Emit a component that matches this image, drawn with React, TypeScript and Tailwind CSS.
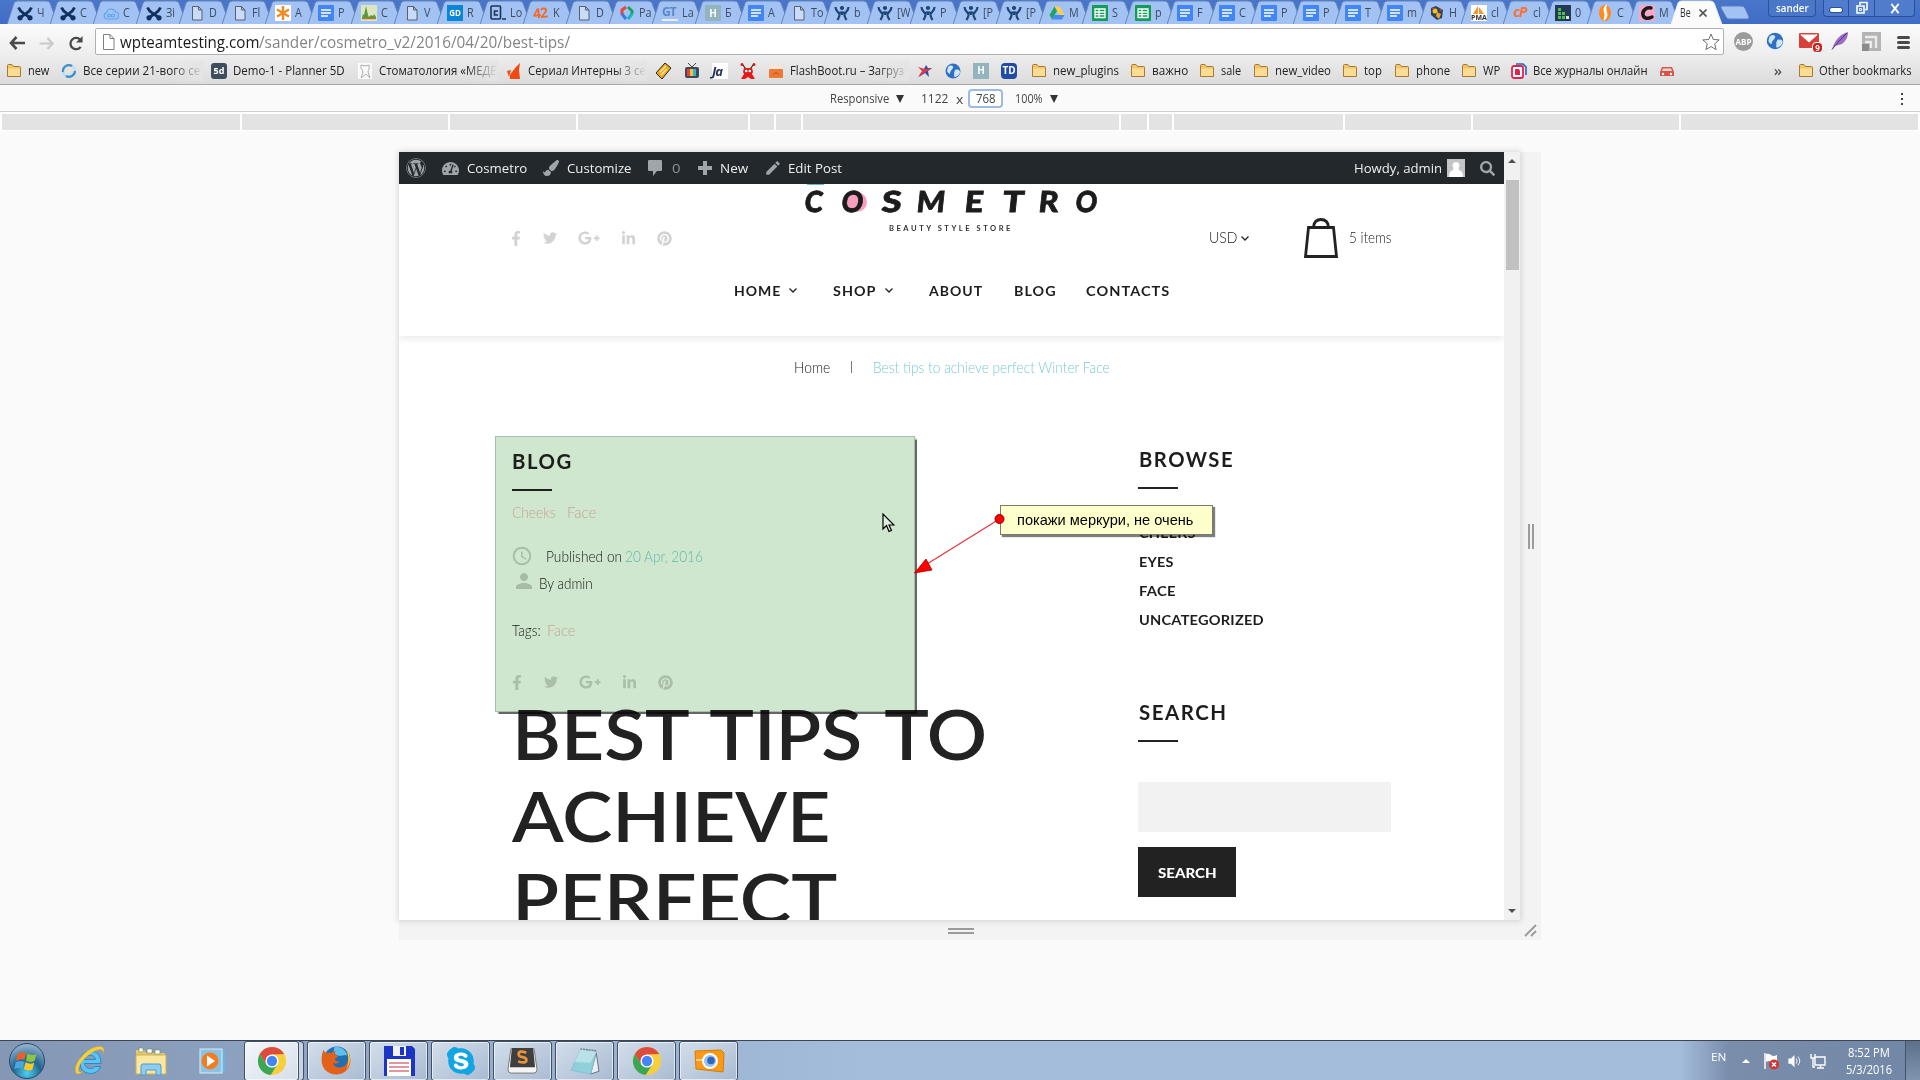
import React, { useLayoutEffect, useRef, useState } from "react";
import { FaWordpress, FaTachometerAlt, FaPaintBrush, FaFacebookF, FaTwitter, FaLinkedinIn, FaPinterest, FaSkype, FaSearch } from "react-icons/fa";
import { FaGooglePlusG } from "react-icons/fa6";
import { MdEdit, MdPerson, MdAccessTime } from "react-icons/md";

/* Single line of text stretched to an exact width. */
function Fit({ w, className = "", children }: { w: number; className?: string; children: React.ReactNode }) {
  const ref = useRef<HTMLSpanElement>(null);
  const [k, setK] = useState(1);
  useLayoutEffect(() => {
    if (ref.current) setK(w / ref.current.offsetWidth);
  }, [w]);
  return (
    <span className={"block shrink-0 whitespace-nowrap " + className} style={{ width: w }}>
      <span ref={ref} className="inline-block origin-left" style={{ transform: `scaleX(${k})` }}>
        {children}
      </span>
    </span>
  );
}

type IconKind = string;

function Ico({ k }: { k: IconKind }) {
  const svg = (c: React.ReactNode) => (
    <svg viewBox="0 0 16 16" className="block h-4 w-4 shrink-0">
      {c}
    </svg>
  );
  switch (k) {
    case "x":
      return svg(
        <g stroke="#12305f" fill="none" strokeWidth="2.800">
          <path d="M1.500 2.500c1.500 4 4 5 7 7 2 1.300 3.500 2 5 4.500M14.500 2.500c-1.500 4-4 5-7 7-2 1.300-3.500 2-5 4.500" />
          <circle cx="3" cy="12.800" r="1.200" />
          <circle cx="13" cy="12.800" r="1.200" />
        </g>
      );
    case "jira":
      return svg(
        <g fill="none" stroke="#1f4678" strokeWidth="2.200">
          <circle cx="8" cy="3" r="1.400" fill="#1f4678" strokeWidth="1.400" />
          <path d="M1.500 2c0 4 3 5 4 7 .6 2-1 4-2 6M14.500 2c0 4-3 5-4 7-.6 2 1 4 2 6M5 8c2-1 4-1 6 0M8 7v3" />
        </g>
      );
    case "page":
      return svg(<path d="M3.500 1.500h6l3.500 3.500v10h-9.500zM9.500 1.500v3.500h3.500" fill="#eef3fb" fillOpacity=".5" stroke="#5a5f68" />);
    case "doc":
      return svg(
        <>
          <rect width="16" height="16" rx="1" fill="#4285f4" />
          <path d="M3 5h10M3 8h10M3 11h7" stroke="#fff" strokeWidth="1.500" />
        </>
      );
    case "sheet":
      return svg(
        <>
          <rect width="16" height="16" rx="1" fill="#0f9d58" />
          <path d="M3 4h10v8.500H3zM3 7h10M3 9.700h10M7 4v8.500" stroke="#fff" fill="none" strokeWidth="1.300" />
        </>
      );
    case "cloud":
      return svg(
        <g fill="none" stroke="#5aa7ee" strokeWidth="1.200">
          <path d="M4 14a3.300 3.300 0 0 1-.6-6.400A4.800 4.800 0 0 1 12.500 7 3.500 3.500 0 0 1 12 14z" />
          <circle cx="6" cy="10.500" r="1.500" />
          <circle cx="10" cy="10.500" r="1.500" />
        </g>
      );
    case "aster":
      return svg(
        <>
          <rect width="16" height="16" fill="#fff" />
          <path d="M8 1v14M2 4.500l12 7M14 4.500l-12 7" stroke="#f08a24" strokeWidth="2.400" />
        </>
      );
    case "green":
      return svg(
        <>
          <rect width="16" height="16" fill="#dde6c0" />
          <path d="M1 13l1-4 1 1 2-9 2 9 1 2 2-2 2 1 1-2 2 3v2z" fill="#5a9a3c" />
          <path d="M1 13.500h14" stroke="#b5772c" strokeWidth="1.500" />
        </>
      );
    case "gd":
      return <b className="flex h-4 w-4 shrink-0 items-center justify-center bg-[#0a86d8] text-[8px] text-white">GD</b>;
    case "c_":
      return svg(
        <>
          <rect x="1" y="1" width="9.500" height="13" rx="1" fill="none" stroke="#1b3357" strokeWidth="1.600" />
          <path d="M8 6H4.500v4H8M12 14h4" fill="none" stroke="#1b3357" strokeWidth="1.600" />
        </>
      );
    case "42":
      return <b className="block h-4 w-4 shrink-0 -rotate-6 text-[14px] leading-4 tracking-[-1px] text-[#f26a2a]">42</b>;
    case "multi":
      return svg(
        <g fill="none" strokeWidth="3">
          <path d="M7 2L3 5v5" stroke="#e9463a" />
          <path d="M3 9l4 5" stroke="#3b78e7" />
          <path d="M9 2l4 4v3" stroke="#1aa260" />
          <path d="M13 9l-4 5" stroke="#15b7c4" />
        </g>
      );
    case "gt":
      return <b className="block h-4 w-4 shrink-0 border-b-2 border-white/70 text-[12px] leading-[14px] tracking-[-1px] text-[#5b86c9]">GT</b>;
    case "h":
      return <b className="flex h-4 w-4 shrink-0 items-center justify-center bg-[#93b3bd] text-[10px] text-white">H</b>;
    case "td":
      return <b className="flex h-4 w-4 shrink-0 items-center justify-center rounded-sm bg-[#1f4aa6] text-[10px] text-white">TD</b>;
    case "drive":
      return svg(
        <>
          <path d="M5.500 1.500h5l5 8.500h-5z" fill="#ffcf48" />
          <path d="M5.500 1.500L.5 10l2.500 4.500L8 6z" fill="#1da462" />
          <path d="M3 14.500L5.500 10h10L13 14.500z" fill="#4688f4" />
        </>
      );
    case "hh":
      return svg(
        <>
          <path d="M2 3l5-2 7 4-1 8-5 2-6-5z" fill="#34405e" />
          <circle cx="6" cy="6" r="2.500" fill="#f0c419" />
          <path d="M8 7l4 2-2 5-3-3z" fill="#e3a82c" />
          <path d="M3 3l2 1M11 4l1 2" stroke="#d33" strokeWidth="1.500" />
        </>
      );
    case "pma":
      return (
        <span className="flex h-4 w-4 shrink-0 flex-col items-center bg-white">
          <svg viewBox="0 0 16 9" className="h-[9px] w-4">
            <path d="M2 9L7 1v8zM8 9V2l5 7z" fill="#f5952a" />
          </svg>
          <b className="text-[7px] leading-[7px] text-[#333]">PMA</b>
        </span>
      );
    case "cp":
      return <b className="block h-4 w-4 shrink-0 text-[14px] italic leading-[14px] tracking-[-1px] text-[#ff6c2c]">cP</b>;
    case "bars":
      return svg(
        <>
          <rect width="16" height="16" fill="#243a55" />
          <path d="M3 3h3v3H3zM3 7h3v3H3zM3 11h3v3H3zM7 7h3v3H7zM7 11h3v3H7z" fill="#4fc04f" />
          <path d="M11 11h3v3h-3z" fill="#d9e6d9" />
        </>
      );
    case "flame2":
      return svg(
        <>
          <ellipse cx="8" cy="8" rx="6" ry="8" fill="#ff8a1e" />
          <path d="M9 1c-5 4 2 7-2 14 6-5 0-8 2-14z" fill="#fff" stroke="#fff" strokeWidth="1.500" />
        </>
      );
    case "cc":
      return svg(
        <>
          <rect width="16" height="16" fill="#f5a9c6" />
          <path d="M12 3C7 2 3 6 4 10s5 4 9 2" fill="none" stroke="#1b1b1b" strokeWidth="3.500" strokeLinecap="round" />
        </>
      );
    case "folder":
      return svg(
        <>
          <path d="M1.500 13.500v-11q0-1 1-1h3.500l1.500 2h6q1 0 1 1v9z" fill="#f3c567" stroke="#a87a3a" />
          <path d="M2 5.500h12V13H2z" fill="#fbdc93" />
        </>
      );
    case "swirl":
      return svg(
        <g fill="none" strokeWidth="2.200">
          <circle cx="8" cy="8" r="6" stroke="#b7dcef" />
          <path d="M2 9a6 6 0 0 1 9-6M14 8a6 6 0 0 1-9 5" stroke="#3d8fc7" />
        </g>
      );
    case "5d":
      return <b className="flex h-4 w-4 shrink-0 items-center justify-center rounded-[3px] bg-[#3f4e5c] text-[9px] text-white">5d</b>;
    case "tooth":
      return svg(
        <>
          <rect x="1" width="14" height="16" fill="#fafafa" />
          <path d="M4 2c3 1 5 1 8 0 1 4-1 5-1 7l2 6-4-4-5 4 2-6c0-2-3-3-2-7z" fill="none" stroke="#a9adb2" />
        </>
      );
    case "fire":
      return svg(
        <>
          <path d="M10 4l4-4-1 7 1 9H4q-1-4 2-7z" fill="#ee4a12" />
          <path d="M5 7l-4 1 2 6z" fill="#ee4a12" />
        </>
      );
    case "bolt":
      return svg(
        <>
          <path d="M1 10L10 0l6 5L7 16z" fill="#f3a71e" stroke="#222" />
          <path d="M5 9l6-6M6 12l6-6" stroke="#fff2a6" strokeWidth="1.200" />
        </>
      );
    case "tv":
      return svg(
        <>
          <path d="M4 0l4 4 4-4" fill="none" stroke="#444" />
          <rect x="1" y="4" width="14" height="11" rx="2" fill="#3d4a57" />
          <path d="M3 6h3v7H3z" fill="#e3413b" />
          <path d="M6 6h3v7H6z" fill="#f5c52f" />
          <path d="M9 6h3v7H9z" fill="#35b1d4" />
        </>
      );
    case "ja":
      return <b className="block h-4 w-4 shrink-0 bg-white text-[13px] italic leading-4 tracking-[-1px] text-[#1f2f55]">Ja</b>;
    case "red":
      return svg(
        <>
          <path d="M2 1l4 5M14 1l-4 5" stroke="#222" strokeWidth="1.200" />
          <circle cx="2" cy="1.500" r="1.500" fill="#e01b1b" />
          <circle cx="14" cy="1.500" r="1.500" fill="#e01b1b" />
          <path d="M4 5h8l1 4-1 2 3 5h-4l-3-2-3 2H1l3-5-1-2z" fill="#e01b1b" />
          <circle cx="6.200" cy="8" r="1.300" fill="#fff" />
          <circle cx="9.800" cy="8" r="1.300" fill="#fff" />
        </>
      );
    case "flash":
      return svg(
        <>
          <rect x="3" y="1" width="10" height="6" fill="#f3e6dc" />
          <rect x="1" y="6" width="14" height="9" rx="1" fill="#ec7a34" />
          <path d="M5 12c2-3 4-3 6 0" stroke="#c24f12" fill="none" />
        </>
      );
    case "star":
      return svg(
        <>
          <path d="M9 2l2 3 4 0-4 3 1 6-4-4-6 4 4-6z" fill="#2c4fa3" />
          <path d="M1 4l7 2 7-1-6 4-8 5 4-6z" fill="#d63a4b" />
        </>
      );
    case "globe":
      return svg(
        <>
          <circle cx="8" cy="8" r="7.500" fill="#2f6fc4" />
          <path d="M3 4c3-3 6-1 5 1S5 8 5 10 3 10 2 8zM10 7c3-1 5 0 5 2s-3 5-5 5 0-3-1-4z" fill="#cfe6f7" />
        </>
      );
    case "journal":
      return svg(
        <>
          <path d="M5 1h7l3 3v8" fill="none" stroke="#2b62b8" strokeWidth="1.600" />
          <rect x="1" y="3" width="11" height="12" rx="2" fill="#fff" stroke="#e0244f" strokeWidth="1.800" />
          <path d="M4 6h4l1 2v4H4z" fill="#e0244f" />
        </>
      );
    case "car":
      return svg(
        <>
          <path d="M1 9l2-5h10l2 5v4H1z" fill="#d9534a" />
          <path d="M4 5.500h8l1 2.500H3z" fill="#f3d9d4" />
          <circle cx="4" cy="11" r="1.200" fill="#fff" />
          <circle cx="12" cy="11" r="1.200" fill="#fff" />
        </>
      );
  }
  return null;
}

const tabs: [string, string][] = [
  ["x", "Ч"], ["x", "С"], ["cloud", "С"], ["x", "Зі"], ["page", "D"], ["page", "Fl"], ["aster", "A"], ["doc", "P"],
  ["green", "C"], ["page", "V"], ["gd", "R"], ["c_", "Lo"], ["42", "K"], ["page", "D"], ["multi", "Pa"], ["gt", "La"],
  ["h", "Б"], ["doc", "A"], ["page", "To"], ["jira", "b"], ["jira", "[W"], ["jira", "P"], ["jira", "[P"], ["jira", "[P"],
  ["drive", "M"], ["sheet", "S"], ["sheet", "p"], ["doc", "F"], ["doc", "C"], ["doc", "P"], ["doc", "P"], ["doc", "T"],
  ["doc", "m"], ["hh", "H"], ["pma", "cl"], ["cp", "cl"], ["bars", "0"], ["flame2", "C"], ["cc", "M"],
];

function TabShape({ active }: { active?: boolean }) {
  return (
    <svg viewBox="0 0 52 24" className="absolute left-0 top-0 h-6 w-[52px]">
      <path
        d="M0 24.500L7 3Q8 1 10.500 1H39Q42 1 43 3L51 24.500"
        fill={active ? "#fbfbfb" : "#a2c2f4"}
        stroke={active ? "#e9eef7" : "#6485bd"}
      />
    </svg>
  );
}

function TabStrip() {
  return (
    <div className="flex h-6 shrink-0 bg-linear-to-b from-[#4a76c9] to-[#3f6cc6] pl-[7px] text-[12px] text-[#3e4b60]">
      {tabs.map(([k, t], i) => (
        <div key={i} className={"relative h-6 shrink-0 " + (i < 26 ? "w-[43px]" : "w-[42px]")}>
          <TabShape />
          <div className="relative flex h-6 items-center gap-1 overflow-hidden pl-[10px] pr-[1px] pt-[2px]">
            <Ico k={k} />
            <span className="origin-left scale-x-90 whitespace-nowrap">{t}</span>
          </div>
        </div>
      ))}
      <div className="relative h-6 w-[52px] shrink-0">
        <TabShape active />
        <div className="relative flex h-6 items-center pl-[9px] pt-[2px] text-[#333]">
          <Fit w={11} className="text-[12px]">Be</Fit>
          <svg viewBox="0 0 8 8" className="ml-[8px] h-2 w-2">
            <path d="M.5.5l7 7M7.500.5l-7 7" stroke="#555" strokeWidth="1.600" />
          </svg>
        </div>
      </div>
      <svg viewBox="0 0 30 15" className="-ml-[3px] mt-[5px] h-[15px] w-[30px] shrink-0">
        <path d="M2 1h19q3 0 4 2l4 9q.5 2-2 2H9q-2 0-3-2L1 3q-.5-2 1-2z" fill="#a2c2f4" stroke="#5a7dbd" />
      </svg>
      <div className="ml-[18px] flex h-[17px] w-[48px] shrink-0 items-center justify-center rounded-b border border-t-0 border-[#2c529c] bg-[#4a77c8] text-white">
        <Fit w={33} className="text-[11px] font-semibold">sander</Fit>
      </div>
      <div className="ml-[7px] flex h-[17px] w-[92px] shrink-0 rounded-b border border-t-0 border-[#2b4f98] bg-[#4f7ccc]">
        <div className="flex w-[25px] items-center justify-center border-r border-[#2b4f98]">
          <span className="mt-1 h-1 w-3 rounded-sm bg-white ring-1 ring-[#31518d]" />
        </div>
        <div className="flex w-[26px] items-center justify-center border-r border-[#2b4f98]">
          <svg viewBox="0 0 14 14" className="h-[14px] w-[14px]" fill="none" stroke="#fff" strokeWidth="1.600">
            <path d="M5 4V1.500h7v7H10M2 5h7v7H2z" />
            <path d="M4.500 7.500h2v2h-2z" strokeWidth="1" />
          </svg>
        </div>
        <div className="flex flex-1 items-center justify-center">
          <svg viewBox="0 0 12 12" className="h-[11px] w-[12px]">
            <path d="M2 1l8 10M10 1L2 11" stroke="#fff" strokeWidth="2" />
          </svg>
        </div>
      </div>
    </div>
  );
}

function Toolbar() {
  return (
    <div className="flex h-[34px] shrink-0 items-center bg-linear-to-b from-[#fbfbfb] to-[#ececec]">
      <svg viewBox="0 0 16 14" className="ml-[9px] mt-1 h-[14px] w-4 shrink-0" fill="none" stroke="#4a4a4a" strokeWidth="2.600">
        <path d="M7.500 1L2 7l5.500 6M2 7h14" />
      </svg>
      <svg viewBox="0 0 16 14" className="ml-[14px] mt-1 h-[13px] w-4 shrink-0" fill="none" stroke="#c9c9c9" strokeWidth="2.400">
        <path d="M8.500 1L14 7l-5.500 6M14 7H0" />
      </svg>
      <svg viewBox="0 0 16 16" className="ml-[13px] mt-1 h-[15px] w-[16px] shrink-0">
        <path d="M13 11.500A6 6 0 1 1 12.500 4" fill="none" stroke="#4a4a4a" strokeWidth="2.400" />
        <path d="M15 0v7H8z" fill="#4a4a4a" />
      </svg>
      <div className="ml-[11px] mt-[1px] flex h-[27px] w-[1629px] shrink-0 items-center rounded-[2px] border border-[#b5b0ae] bg-white">
        <svg viewBox="0 0 12 16" className="ml-[7px] h-4 w-3" fill="#fff" stroke="#808080">
          <path d="M.5.500h6.500l4 4v11H.5zM7 .5v4h4" />
        </svg>
        <div className="ml-[5px] mt-[1px] flex text-[16px]">
          <Fit w={139} className="text-[#1a1a1a]">wpteamtesting.com</Fit>
          <Fit w={311} className="text-[#858585]">/sander/cosmetro_v2/2016/04/20/best-tips/</Fit>
        </div>
        <svg viewBox="0 0 18 18" className="ml-auto mr-[3px] h-[18px] w-[18px]">
          <path d="M9 1l2.300 5.500 5.900.4-4.500 3.900 1.400 5.800L9 13.500l-5.100 3.100 1.400-5.800L.8 6.900l5.900-.4z" fill="#fff" stroke="#6f6f6f" />
        </svg>
      </div>
      <b className="ml-[10px] mt-[1px] flex h-[19px] w-[19px] shrink-0 items-center justify-center rounded-full bg-[#9b9b9b] text-[8px] text-white">ABP</b>
      <span className="ml-[14px] scale-110"><Ico k="globe" /></span>
      <div className="relative ml-[16px]">
        <svg viewBox="0 0 20 16" className="h-4 w-5">
          <rect width="20" height="15" rx="1" fill="#d8403a" />
          <path d="M2 1.500l8 7 8-7" fill="#fff" stroke="#fff" strokeWidth="1.500" />
        </svg>
        <b className="absolute left-[13px] top-[9px] flex h-[11px] w-[11px] items-center justify-center rounded-sm border border-white bg-[#c5221c] text-[8px] text-white">9</b>
      </div>
      <svg viewBox="0 0 18 18" className="ml-[12px] h-[18px] w-[18px]">
        <path d="M1 17.500C4 8 9 2 17 0c0 5-2 9-6 12-2 1-5 1-7 2z" fill="#9a6cc2" />
        <path d="M1 17.500C6 11 10 7 16 1" stroke="#5a3585" fill="none" />
      </svg>
      <svg viewBox="0 0 19 19" className="ml-[13px] h-[19px] w-[19px]">
        <rect width="19" height="19" fill="#b4b4b4" />
        <path d="M3 5h11v11M3 10h6v6" fill="none" stroke="#ececec" strokeWidth="2.400" />
        <rect y="12" width="7" height="7" fill="#8b8b8b" />
      </svg>
      <div className="ml-[16px] mt-[2px] flex w-[13px] flex-col gap-[2px]">
        <i className="h-[3px] rounded bg-[#4a4a4a]" />
        <i className="h-[3px] rounded bg-[#4a4a4a]" />
        <i className="h-[3px] rounded bg-[#4a4a4a]" />
      </div>
    </div>
  );
}

/* icon, label, label width, distance to the next entry, faded end */
const bookmarks: [string, string, number, number, boolean?][] = [
  ["folder", "new", 21, 55],
  ["swirl", "Все серии 21-вого се", 117, 150, true],
  ["5d", "Demo-1 - Planner 5D", 112, 146],
  ["tooth", "Стоматология «МЕДЕ", 118, 149, true],
  ["fire", "Сериал Интерны 3 се", 118, 149, true],
  ["bolt", "", 0, 29], ["tv", "", 0, 28], ["ja", "", 0, 28], ["red", "", 0, 28],
  ["flash", "FlashBoot.ru – Загруз", 114, 149, true],
  ["star", "", 0, 28], ["globe", "", 0, 28], ["h", "", 0, 28], ["td", "", 0, 30],
  ["folder", "new_plugins", 66, 99],
  ["folder", "важно", 36, 69],
  ["folder", "sale", 20, 54],
  ["folder", "new_video", 56, 89],
  ["folder", "top", 18, 52],
  ["folder", "phone", 34, 67],
  ["folder", "WP", 17, 50],
  ["journal", "Все журналы онлайн", 115, 148],
  ["car", "", 0, 16],
];

function Bookmarks() {
  return (
    <div className="flex h-[27px] shrink-0 items-center border-b border-[#a9a9a9] bg-linear-to-b from-[#ebebeb] to-[#dcdcdc] pb-[1px] pl-[6px] text-[12px] text-[#222]">
      {bookmarks.map(([k, t, w, d, fade], i) => (
        <div key={i} className="relative flex h-full shrink-0 items-center gap-[6px]" style={{ width: d }}>
          <Ico k={k} />
          {t && <Fit w={w}>{t}</Fit>}
          {fade && <span className="absolute right-2 h-5 w-8 bg-linear-to-r from-[#e4e4e4]/0 to-[#e4e4e4]" />}
        </div>
      ))}
      <b className="ml-auto mr-[16px] text-[15px] font-semibold text-[#555]">»</b>
      <Ico k="folder" />
      <Fit w={93} className="ml-[5px] mr-[8px]">Other bookmarks</Fit>
    </div>
  );
}

const rulers = [238, 206, 126, 170, 24, 25, 316, 26, 23, 169, 126, 206, 237];

function DeviceBar() {
  return (
    <>
      <div className="flex h-[27px] shrink-0 items-center border-b border-[#cfcfcf] bg-[#fafafa] pl-[830px] pt-[1px] text-[12px] text-[#444]">
        <Fit w={59}>Responsive</Fit>
        <i className="ml-[7px] border-x-4 border-t-[8px] border-x-transparent border-t-[#333]" />
        <Fit w={27} className="ml-[17px]">1122</Fit>
        <Fit w={7} className="ml-[8px] mt-[2px]">x</Fit>
        <div className="ml-[5px] flex h-[19px] w-[35px] items-center rounded-sm border-2 border-[#9db9e6] bg-white pl-[6px]">
          <Fit w={20}>768</Fit>
        </div>
        <Fit w={28} className="ml-[12px]">100%</Fit>
        <i className="ml-[7px] border-x-4 border-t-[8px] border-x-transparent border-t-[#333]" />
        <div className="ml-auto mr-[17px] flex flex-col gap-[3px]">
          <i className="h-[2px] w-[2px] bg-[#444]" />
          <i className="h-[2px] w-[2px] bg-[#444]" />
          <i className="h-[2px] w-[2px] bg-[#444]" />
        </div>
      </div>
      <div className="flex h-[19px] shrink-0 gap-[2px] bg-white px-[2px] pb-[1px] pt-[2px]">
        {rulers.map((w, i) => (
          <div key={i} className="h-4 shrink-0 bg-[#e3e3e3]" style={{ width: w }} />
        ))}
      </div>
    </>
  );
}

function AdminBar() {
  return (
    <div className="flex h-8 shrink-0 items-center bg-[#23282d] pl-[7px] text-[13px] text-[#eee] [&>span]:mt-[2px]">
      <FaWordpress className="h-5 w-5 text-[#9ea3a8]" />
      <FaTachometerAlt className="ml-[16px] h-[17px] w-[17px] text-[#a0a5aa]" />
      <Fit w={60} className="ml-[8px]">Cosmetro</Fit>
      <FaPaintBrush className="ml-[16px] h-[16px] w-[16px] text-[#a0a5aa]" />
      <Fit w={65} className="ml-[8px]">Customize</Fit>
      <svg viewBox="0 0 14 16" className="ml-[16px] h-4 w-[14px]">
        <path d="M1 0h12q1 0 1 1v9q0 1-1 1H9l-4 5v-5H1q-1 0-1-1V1q0-1 1-1z" fill="#a0a5aa" />
      </svg>
      <Fit w={8} className="ml-[10px] text-[#8d9297]">0</Fit>
      <svg viewBox="0 0 14 14" className="ml-[18px] h-[14px] w-[14px]">
        <path d="M7 0v14M0 7h14" stroke="#a0a5aa" strokeWidth="4" />
      </svg>
      <Fit w={28} className="ml-[8px]">New</Fit>
      <MdEdit className="ml-[16px] h-[18px] w-[18px] text-[#a0a5aa]" />
      <Fit w={54} className="ml-[6px]">Edit Post</Fit>
      <Fit w={88} className="ml-auto mr-[5px]">Howdy, admin</Fit>
      <svg viewBox="0 0 18 18" className="h-[18px] w-[18px]">
        <rect width="18" height="18" fill="#c4c4c4" />
        <path d="M9 3a3.500 3.500 0 0 1 2.500 6l.5 2q4 1 4 7H2q0-6 4-7l.5-2A3.500 3.500 0 0 1 9 3z" fill="#fff" />
      </svg>
      <FaSearch className="ml-[15px] mr-[9px] h-[15px] w-[15px] text-[#a0a5aa]" />
    </div>
  );
}

function Social() {
  return (
    <div className="flex h-4 items-center text-[#d3d3d3]">
      <FaFacebookF className="h-[15px] w-[10px]" />
      <FaTwitter className="ml-[22px] h-[14px] w-[14px]" />
      <FaGooglePlusG className="ml-[21px] h-[20px] w-[22px]" />
      <FaLinkedinIn className="ml-[21px] h-[15px] w-[15px]" />
      <FaPinterest className="ml-[21px] h-[15px] w-[15px]" />
    </div>
  );
}

function Chevron({ className = "" }: { className?: string }) {
  return (
    <svg viewBox="0 0 8 5" className={"h-[5px] w-2 shrink-0 " + className} fill="none" stroke="#222" strokeWidth="1.300">
      <path d="M.5.500L4 4 7.500.5" />
    </svg>
  );
}

const logo: [string, number, number][] = [
  ["C", 18, 19], ["O", 22, 18], ["S", 20, 15], ["M", 29, 19], ["E", 19, 19], ["T", 22, 14], ["R", 20, 17], ["O", 22, 0],
];

function SiteHeader() {
  return (
    <header className="flex h-[152px] shrink-0 flex-col bg-white shadow-[0_2px_8px_rgba(0,0,0,0.10)]">
      <div className="relative flex h-[78px]">
        <span className="absolute left-[408px] top-0 h-[1px] w-[17px] bg-[#5fbfc0]" />
        <div className="ml-[112px] mt-[46px] w-[293px]">
          <Social />
        </div>
        <div className="flex w-[294px] flex-col items-center">
          <div className="mt-[4px] flex h-[26px] items-center">
            {logo.map(([c, w, gap], i) => (
              <span key={i} className="relative flex shrink-0" style={{ width: w, marginRight: gap }}>
                {i === 1 && <i className="absolute left-[5px] top-[4px] h-[20px] w-[20px] rounded-full bg-[#f99dc0]" />}
                <span className="relative -skew-x-6">
                  <Fit w={w} className="text-[29px] font-black leading-[26px] text-[#1c1c1c] [-webkit-text-stroke:0.800px_#1c1c1c]">{c}</Fit>
                </span>
              </span>
            ))}
          </div>
          <Fit w={124} className="mt-[10px] text-[7.500px] font-bold leading-[10px] tracking-[2.500px] text-[#333]">BEAUTY STYLE STORE</Fit>
        </div>
        <div className="ml-[111px] mt-[33px] flex h-[42px] items-center text-[15px] font-light text-[#222] [&>span]:-mt-[1px]">
          <Fit w={28}>USD</Fit>
          <Chevron className="ml-[4px]" />
          <svg viewBox="0 0 34 40" className="ml-[55px] h-10 w-[34px]" fill="none" stroke="#222" strokeWidth="2.800">
            <path d="M4.500 9.500h25l3 29h-31zM9.500 9C10 4 13 1.500 17 1.500S24 4 24.500 9" />
          </svg>
          <Fit w={43} className="ml-[11px]">5 items</Fit>
        </div>
      </div>
      <nav className="mt-[17px] flex h-[22px] items-center pl-[335px] text-[14px] font-bold tracking-[1px] text-[#1d1d1d]">
        <Fit w={47}>HOME</Fit>
        <Chevron className="ml-[8px]" />
        <Fit w={43} className="ml-[36px]">SHOP</Fit>
        <Chevron className="ml-[9px]" />
        <Fit w={54} className="ml-[36px]">ABOUT</Fit>
        <Fit w={43} className="ml-[31px]">BLOG</Fit>
        <Fit w={84} className="ml-[29px]">CONTACTS</Fit>
      </nav>
    </header>
  );
}

function PostMeta() {
  return (
    <div className="flex h-[257px] flex-col text-[15px] font-light text-[#222]">
      <Fit w={61} className="h-[24px] text-[20px] font-bold leading-[24px] tracking-[1.500px]">BLOG</Fit>
      <i className="mt-[16px] h-[2px] w-10 shrink-0 bg-[#222]" />
      <div className="mt-[11px] flex h-[20px] items-center text-[#f4b6bd]">
        <Fit w={44}>Cheeks</Fit>
        <Fit w={29} className="ml-[11px]">Face</Fit>
      </div>
      <div className="mt-[24px] flex h-[20px] items-center">
        <MdAccessTime className="-ml-[1px] h-[22px] w-[22px] text-[#cfcfcf]" />
        <Fit w={76} className="ml-[13px]">Published on</Fit>
        <Fit w={78} className="ml-[3px] text-[#80cdd0]">20 Apr, 2016</Fit>
      </div>
      <div className="mt-[7px] flex h-[20px] items-center">
        <MdPerson className="-mt-[5px] h-[24px] w-[24px] text-[#cfcfcf]" />
        <Fit w={54} className="ml-[3px]">By admin</Fit>
      </div>
      <div className="mt-[27px] flex h-[20px] items-center">
        <Fit w={29}>Tags:</Fit>
        <Fit w={28} className="ml-[6px] text-[#f4b6bd]">Face</Fit>
      </div>
      <div className="mt-[34px]">
        <Social />
      </div>
    </div>
  );
}

function Page() {
  return (
    <div className="relative flex h-[768px] w-[1105px] flex-col overflow-hidden bg-white font-['Lato',sans-serif]">
      <div className="font-['Open_Sans','Noto_Sans',sans-serif]">
        <AdminBar />
      </div>
      <SiteHeader />
      <div className="mt-[21px] flex h-[20px] shrink-0 items-center pl-[395px] text-[15px] font-light text-[#222]">
        <Fit w={36}>Home</Fit>
        <i className="ml-[21px] h-[12px] w-px bg-[#777]" />
        <Fit w={237} className="ml-[21px] text-[#7ccbcf]">Best tips to achieve perfect Winter Face</Fit>
      </div>
      <div className="flex pl-[113px] pt-[72px]">
        <div className="w-[626px] shrink-0">
          <PostMeta />
          <h1 className="-mt-[13px] text-[68.500px] font-semibold leading-[82px] text-[#222] [word-spacing:5px]">
            <Fit w={475}>BEST TIPS TO</Fit>
            <Fit w={318}>ACHIEVE</Fit>
            <Fit w={325}>PERFECT</Fit>
          </h1>
        </div>
        <aside className="-mt-[2px] flex w-[253px] shrink-0 flex-col font-bold text-[#1d1d1d]">
          <Fit w={95} className="ml-[1px] text-[20px] leading-[24px] tracking-[1.500px]">BROWSE</Fit>
          <i className="mt-[16px] h-[2px] w-10 bg-[#222]" />
          <div className="ml-[1px] mt-[29px] flex flex-col text-[14px] leading-[29px] tracking-[0.200px]">
            <Fit w={57}>CHEEKS</Fit>
            <Fit w={35}>EYES</Fit>
            <Fit w={37}>FACE</Fit>
            <Fit w={125}>UNCATEGORIZED</Fit>
          </div>
          <Fit w={89} className="ml-[1px] mt-[66px] text-[20px] leading-[24px] tracking-[1.500px]">SEARCH</Fit>
          <i className="mt-[16px] h-[2px] w-10 bg-[#222]" />
          <div className="mt-[40px] h-[50px] bg-[#f2f2f2]" />
          <div className="mt-[15px] flex h-[50px] w-[98px] items-center justify-center bg-[#222] text-white">
            <Fit w={59} className="text-[14px] font-black">SEARCH</Fit>
          </div>
        </aside>
      </div>
    </div>
  );
}

function Annotations() {
  return (
    <>
      <div className="absolute left-[96px] top-[284px] h-[276px] w-[420px] border border-[#a9bfa9] bg-[#cee7ce] mix-blend-multiply shadow-[1.500px_1.500px_1px_rgba(0,0,0,0.6)]" />
      <div className="absolute left-[601px] top-[353px] flex h-[30px] w-[213px] items-center border border-[#7a7a66] bg-[#ffffcc] pl-[16px] font-['Liberation_Sans',sans-serif] text-[15px] text-black shadow-[2px_2px_1px_rgba(0,0,0,0.5)]">
        <Fit w={176}>покажи меркури, не очень</Fit>
      </div>
      <svg viewBox="0 0 100 70" className="absolute left-[510px] top-[358px] h-[70px] w-[100px]">
        <path d="M90.500 9L18 54" stroke="#e8323c" strokeWidth="1.200" />
        <circle cx="90.500" cy="9" r="4.500" fill="#f00" stroke="#8b0000" />
        <path d="M5.500 63L17 49l6 11z" fill="#f00" stroke="#a00" strokeWidth=".8" />
      </svg>
      <svg viewBox="0 0 13 20" className="absolute left-[483px] top-[361px] h-[20px] w-[13px]">
        <path d="M1 1v15l3.500-3.500L7 18.500l2.500-1L7 12h5z" fill="#dcefdc" stroke="#000" strokeWidth="1.200" />
      </svg>
    </>
  );
}

function Device() {
  return (
    <div className="flex flex-1 bg-[#fafafa] pl-[399px] pt-[21px]">
      <div className="h-[788px] w-[1142px] bg-[#f3f3f3]">
        <div className="flex h-[768px]">
          <div className="relative flex h-[768px] w-[1121px] shrink-0 shadow-[0_0_6px_1px_rgba(0,0,0,0.14)]">
            <Page />
            <div className="flex w-4 flex-col items-center bg-[#f1f1f1]">
              <i className="mt-[7px] border-x-4 border-b-4 border-x-transparent border-b-[#505050]" />
              <i className="mt-[17px] h-[90px] w-[13px] bg-[#c1c1c1]" />
              <i className="mb-[7px] mt-auto border-x-4 border-t-4 border-x-transparent border-t-[#505050]" />
            </div>
            <Annotations />
          </div>
          <div className="flex flex-1 items-center justify-center gap-[2px]">
            <i className="h-[25px] w-[2px] bg-[#9b9b9b]" />
            <i className="h-[25px] w-[2px] bg-[#9b9b9b]" />
          </div>
        </div>
        <div className="flex h-5">
          <div className="flex flex-1 flex-col items-center gap-[2px] pl-[2px] pt-[8px]">
            <i className="h-[2px] w-[26px] bg-[#9b9b9b]" />
            <i className="h-[2px] w-[26px] bg-[#9b9b9b]" />
          </div>
          <svg viewBox="0 0 20 20" className="h-5 w-5">
            <path d="M4 16L15 5M10 16l5-5" stroke="#999" strokeWidth="1.800" />
          </svg>
        </div>
      </div>
    </div>
  );
}

function ChromeLogo() {
  return (
    <svg viewBox="0 0 32 32" className="h-[30px] w-[30px]">
      <circle cx="16" cy="16" r="15" fill="#f7cf3a" />
      <path d="M3 8.500A15 15 0 0 1 29 8.500L16 9 9.500 19.500z" fill="#dd4b3e" />
      <path d="M3 8.500A15 15 0 0 0 14.500 31l7.500-11.500-12.500 0z" fill="#3aa757" />
      <circle cx="16" cy="16" r="7" fill="#fff" />
      <circle cx="16" cy="16" r="5.500" fill="#4285f4" />
    </svg>
  );
}

function TaskButton({ children, className = "" }: { children: React.ReactNode; className?: string }) {
  return (
    <div className={"flex h-10 w-[59px] shrink-0 items-center justify-center rounded-[3px] border border-[#3f5067] bg-linear-to-br from-[#d3deeb] to-[#a9bbd2] shadow-[inset_0_0_0_1px_rgba(255,255,255,0.6)] " + className}>
      {children}
    </div>
  );
}

function Taskbar() {
  return (
    <div className="flex h-10 shrink-0 items-center border-t border-[#3a4658] bg-linear-to-r from-[#8497b5] via-[#a3bddb] via-45% to-[#a3bddb] font-['Open_Sans','Noto_Sans',sans-serif]">
      <svg viewBox="0 0 38 38" className="ml-[8px] h-[38px] w-[38px] shrink-0">
        <defs>
          <radialGradient id="orb" cx=".5" cy=".85" r=".8">
            <stop offset="0" stopColor="#4fd0f0" />
            <stop offset=".5" stopColor="#23648f" />
            <stop offset="1" stopColor="#8fb0cc" />
          </radialGradient>
        </defs>
        <circle cx="19" cy="19" r="17.500" fill="url(#orb)" stroke="#294869" />
        <path d="M9.500 12q4-3 8.500-1l-1.500 7q-4-2-8.500 1z" fill="#e8602c" />
        <path d="M19.500 11.500q4 2.500 9 .5l-2 7q-4 2-8.500-.5z" fill="#8cc63f" />
        <path d="M7.700 20.500q4-2.500 8.500-.7l-1.700 7q-4-2-8.500.5z" fill="#4aa5e4" />
        <path d="M17.700 20.300q4 2.500 8.500.4l-1.800 6.800q-4 2-8.500-.4z" fill="#fbc926" />
      </svg>
      <svg viewBox="0 0 32 32" className="ml-[27px] h-[32px] w-[32px] shrink-0">
        <path d="M28 18.500H11.500q.8 5 6 5 3 0 4.500-2h5.500q-2.500 7-10 7Q7 28 7 17.500T17.500 6Q28.500 6.500 28 18.500zM11.500 14.500h11q-.7-4.300-5.300-4.300t-5.700 4.300z" fill="#5cc4f3" stroke="#1d7fc0" strokeWidth=".8" />
        <path d="M3.500 28.500C-2 22 13 1 27 1.500c4 .3 4.500 3 3.500 7 0-4-2.500-4.500-6-3.500C14 8.500 4.500 20 5.500 25.500c.5 2 2.500 2 5 .8-3 2.200-5.500 3.200-7 2.200z" fill="#f6cf3c" stroke="#d9a81e" strokeWidth=".4" />
      </svg>
      <svg viewBox="0 0 32 30" className="ml-[30px] h-[30px] w-[32px] shrink-0">
        <path d="M1 4h8l2 3h19v21H1z" fill="#e6c865" />
        <path d="M4 2h4v4H4zM12 3h5v4h-5zM20 4h5v4h-5z" fill="#fff" stroke="#6b8e4e" strokeWidth=".6" />
        <path d="M1 9h30v19H1z" fill="#f9e7a2" stroke="#cfae55" />
        <path d="M6 29v-9q0-2 2-2h16q2 0 2 2v9h-5v-5h-10v5z" fill="#8ecdf0" stroke="#4b9ccc" />
      </svg>
      <svg viewBox="0 0 28 26" className="ml-[32px] h-[26px] w-[28px] shrink-0">
        <path d="M20 2h6v22h-6z" fill="#68b6e0" />
        <rect x="1" y="1" width="22" height="24" fill="#8cc3e4" stroke="#d8ecf8" />
        <circle cx="11" cy="13" r="8.500" fill="#f07d22" />
        <path d="M8 7.500v11l8-5.500z" fill="#fff" />
      </svg>
      <TaskButton className="relative ml-[17px] !w-[55px] from-[#f4f7fb] to-[#d5deea]">
        <ChromeLogo />
      </TaskButton>
      <div className="h-10 w-[5px] shrink-0 rounded-r border border-l-0 border-[#3f5067] bg-[#c8d4e3]" />
      <TaskButton className="ml-[3px]">
        <svg viewBox="0 0 32 32" className="h-[31px] w-[31px]">
          <circle cx="16.500" cy="15" r="13.500" fill="#1f6fb5" />
          <path d="M14 2c6-1 12 3 13 9-3-2-5 1-9 0s-6-4-4-9z" fill="#5fc0ee" />
          <path d="M2.500 5C0 12-.5 20 4 25.500c6 6.500 17 6.500 22.500.5C31 21 31.500 14 28.500 8c.5 6-1 11-4 13.500-4.500 3.500-11 1.500-12-3 2 1.200 5 .7 6.500-1.500-3 .3-5-1.500-4.500-3 1-1 3-1 3-2.500-1.500-1-3-1-3.500-3 .4-1.200 1-1.800 2-2.500-2.500 0-4 .8-5.500 2.500C8.500 8 7 8 6 8.500 4.500 8 3.500 7 2.500 5z" fill="#e2621b" />
          <path d="M25 3.500c6 5.500 6.500 15 1 21.500 3-7 3.500-14-1-21.500z" fill="#fbd04a" />
        </svg>
      </TaskButton>
      <TaskButton className="ml-[3px]">
        <svg viewBox="0 0 32 32" className="h-[32px] w-[32px]">
          <path d="M1 1h28l3 3v27H1z" fill="#1b35c4" />
          <rect x="10" y="1" width="13" height="10" fill="#f1f3f8" />
          <rect x="17" y="2" width="4" height="8" fill="#1b35c4" />
          <rect x="4" y="14" width="24" height="17" fill="#fff" />
          <path d="M6 18h20M6 22h20M6 26h20" stroke="#c62f3e" strokeWidth="1.200" />
        </svg>
      </TaskButton>
      <TaskButton className="ml-[3px]">
        <FaSkype className="h-[32px] w-[32px] rounded-full bg-[radial-gradient(circle,white_50%,transparent_52%)] text-[#12a5e4]" />
      </TaskButton>
      <TaskButton className="ml-[3px]">
        <svg viewBox="0 0 32 30" className="h-[29px] w-[31px]">
          <path d="M4 3h24l3 21q0 4-3 4H4q-3 0-3-4z" fill="#f4f4f4" stroke="#777" />
          <path d="M5 2h22l2 20H3z" fill="#3f3f40" />
          <path d="M20 7q-8-3-8 1.500 0 2.500 4 3 4 .5 4 3 0 4-8.500 1.500" fill="none" stroke="#e8923a" strokeWidth="2.800" />
        </svg>
      </TaskButton>
      <TaskButton className="ml-[3px]">
        <svg viewBox="0 0 32 30" className="h-[28px] w-[30px]">
          <path d="M28 6l3 20-9 3z" fill="#e9eef2" stroke="#5d6c78" />
          <path d="M11 3l17 2-6 24-21-4z" fill="#8fd0da" stroke="#8cc0cc" />
          <path d="M11 3l17 2-6 12-17-1z" fill="#b9e2e8" />
          <path d="M11 2l17 2" stroke="#6d7f8a" strokeWidth="1.500" strokeDasharray="2 1" />
        </svg>
      </TaskButton>
      <TaskButton className="ml-[3px]">
        <ChromeLogo />
      </TaskButton>
      <TaskButton className="ml-[3px]">
        <svg viewBox="0 0 32 26" className="h-[26px] w-[32px]">
          <path d="M2 3l26-1 3 3-1 19-27-3z" fill="#f99a14" stroke="#d87a08" />
          <circle cx="17" cy="13" r="8" fill="#fff" />
          <circle cx="17" cy="13" r="6" fill="#9cc0ee" />
          <circle cx="18" cy="12.500" r="3.800" fill="#2f66c0" />
          <path d="M3 12h6" stroke="#fff" />
        </svg>
      </TaskButton>
      <div className="ml-auto flex h-full w-[240px] shrink-0 items-center bg-linear-to-r from-[#7c90b0]/0 via-[#7a8eac] via-20% to-[#7287a5] text-[12px] text-white">
        <Fit w={15} className="-mt-[6px] ml-[31px] text-[11px]">EN</Fit>
        <i className="ml-[16px] border-x-4 border-b-4 border-x-transparent border-b-white" />
        <svg viewBox="0 0 18 18" className="ml-[12px] h-[18px] w-[18px] shrink-0">
          <path d="M3 1v16" stroke="#fff" strokeWidth="1.500" />
          <path d="M4 2q3-1 5 1t6 0v7q-4 2-6 0t-5 0z" fill="#fff" />
          <circle cx="12" cy="12.500" r="5" fill="#d8322c" />
          <path d="M10 10.500l4 4M14 10.500l-4 4" stroke="#fff" strokeWidth="1.500" />
        </svg>
        <svg viewBox="0 0 14 16" className="ml-[8px] h-[14px] w-[13px] shrink-0">
          <path d="M0 5h3l4-4v14l-4-4H0z" fill="#fff" />
          <path d="M9 5q2 3 0 6M11 3q4 5 0 10" stroke="#fff" fill="none" />
        </svg>
        <svg viewBox="0 0 16 16" className="ml-[9px] h-[16px] w-[16px] shrink-0" fill="none" stroke="#fff" strokeWidth="1.400">
          <path d="M5 4h10v8H5zM7 15h7M10.500 12v3M1 1v4h4V1M3 5v9h2" />
        </svg>
        <div className="ml-[20px] flex w-[46px] shrink-0 flex-col items-center text-[12px] leading-[17px]">
          <Fit w={42}>8:52 PM</Fit>
          <Fit w={46}>5/3/2016</Fit>
        </div>
        <div className="ml-auto h-full w-[15px] border-l border-[#42546e] bg-linear-to-b from-[#5d708b] to-[#8094b0]" />
      </div>
    </div>
  );
}

export default function App() {
  return (
    <div className="flex h-[1080px] w-[1920px] flex-col overflow-hidden bg-[#fafafa] font-['Open_Sans','Noto_Sans',sans-serif]">
      <TabStrip />
      <Toolbar />
      <Bookmarks />
      <DeviceBar />
      <Device />
      <Taskbar />
    </div>
  );
}
